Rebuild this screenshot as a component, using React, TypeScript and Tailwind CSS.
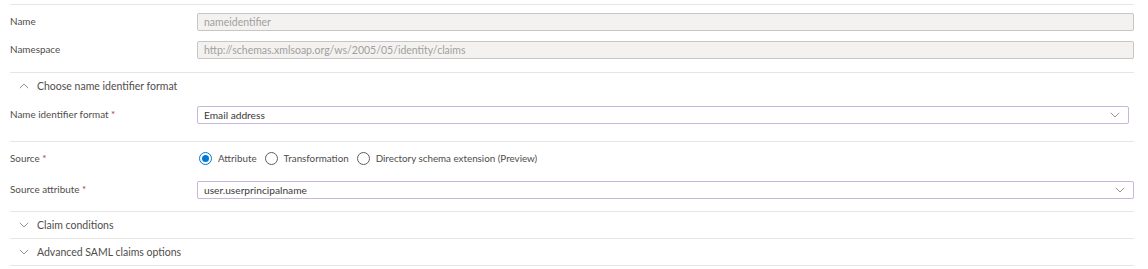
import React from "react";

const Chevron = ({ up = false, className = "" }: { up?: boolean; className?: string }) => (
  <svg width="10" height="6" viewBox="0 0 10 6" className={className} fill="none">
    <path
      d={up ? "M0.8 5.2 L5 1 L9.2 5.2" : "M0.8 0.8 L5 5 L9.2 0.8"}
      stroke="#7a7876"
      strokeWidth="0.8"
    />
  </svg>
);

const Label = ({ text, req = false }: { text: string; req?: boolean }) => (
  <div className="w-[187px] shrink-0 text-[#4f4d4b] text-[9.9px]">
    {text}
    {req && <span className="text-[#b4343a]"> *</span>}
  </div>
);

const Radio = ({ checked, label }: { checked?: boolean; label: string }) => (
  <div className="flex items-center">
    <div
      className={
        "w-[13px] h-[13px] rounded-full border flex items-center justify-center " +
        (checked ? "border-[#0078d4]" : "border-[#605e5c]")
      }
    >
      {checked && <div className="w-[7px] h-[7px] rounded-full bg-[#0078d4]" />}
    </div>
    <span className="ml-[6px] text-[#4f4d4b] text-[9.8px]">{label}</span>
  </div>
);

export default function App() {
  return (
    <div
      className="w-[1148px] h-[269px] bg-white text-[10.5px] leading-none overflow-hidden"
      style={{ fontFamily: 'Lato, "Open Sans", sans-serif' }}
    >
      <div className="ml-[10px] w-[1124px]">
        <div className="mt-[4px] border-t border-[#e8e6e4]" />
        <div className="flex items-center mt-[8px]">
          <Label text="Name" />
          <div className="flex-1 h-[18px] bg-[#f3f2f1] border border-[#c8c6c4] rounded-[2px] flex items-center px-[6px] text-[#a19f9d]">
            nameidentifier
          </div>
        </div>
        <div className="flex items-center mt-[10px]">
          <Label text="Namespace" />
          <div className="flex-1 h-[18px] bg-[#f3f2f1] border border-[#c8c6c4] rounded-[2px] flex items-center px-[6px] text-[#a19f9d]">
            http://schemas.xmlsoap.org/ws/2005/05/identity/claims
          </div>
        </div>
        <div className="mt-[13px] border-t border-[#e8e6e4]" />
        <div className="h-[26px] flex items-center pl-[9px] text-[#4f4d4b]">
          <Chevron up />
          <span className="ml-[8px]">Choose name identifier format</span>
        </div>
        <div className="flex items-center mt-[7px]">
          <Label text="Name identifier format" req />
          <div className="w-[932px] h-[18px] bg-white border border-[#c8b6dc] rounded-[2px] flex items-center justify-between pl-[6px] pr-[8px] text-[#3b3a39] text-[10.2px]">
            <span>Email address</span>
            <Chevron />
          </div>
        </div>
        <div className="mt-[17px] border-t border-[#e8e6e4]" />
        <div className="flex items-center mt-[10px]">
          <Label text="Source" req />
          <div className="flex items-center gap-[8px] pl-[2px]">
            <Radio checked label="Attribute" />
            <Radio label="Transformation" />
            <Radio label="Directory schema extension (Preview)" />
          </div>
        </div>
        <div className="flex items-center mt-[16px]">
          <Label text="Source attribute" req />
          <div className="flex-1 h-[18px] bg-white border border-[#c8b6dc] rounded-[2px] flex items-center justify-between pl-[6px] pr-[8px] text-[#3b3a39] text-[10.2px]">
            <span>user.userprincipalname</span>
            <Chevron />
          </div>
        </div>
        <div className="mt-[12px] border-t border-[#e8e6e4]" />
        <div className="h-[27px] flex items-center pl-[9px] text-[#4f4d4b] border-b border-[#e8e6e4]">
          <Chevron />
          <span className="ml-[8px]">Claim conditions</span>
        </div>
        <div className="h-[27px] flex items-center pl-[9px] text-[#4f4d4b] border-b border-[#e8e6e4]">
          <Chevron />
          <span className="ml-[8px]">Advanced SAML claims options</span>
        </div>
      </div>
    </div>
  );
}
